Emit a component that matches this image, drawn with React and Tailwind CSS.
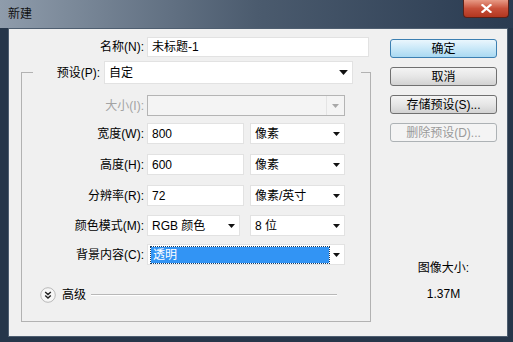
import React from 'react';

const FONT = { fontFamily: '"Liberation Sans", "Noto Sans CJK SC", sans-serif' };

function Arrow({ disabled, big }) {
  return (
    <svg width={big ? 9 : 7} height={big ? 5 : 4} viewBox="0 0 7 4" className="shrink-0">
      <polygon points="0,0 7,0 3.5,4" fill={disabled ? '#a8a8a8' : '#111'} />
    </svg>
  );
}

function TextBox({ value, w }) {
  return (
    <div className={`${w} h-[21px] bg-white border border-[#e2e2e2] flex items-center pl-[4px] text-[12px] text-black`}>
      {value}
    </div>
  );
}

function Select({ value, w, disabled, selected }) {
  if (disabled) {
    return (
      <div className={`${w} h-[21px] bg-[#f4f4f4] border border-[#b4b4b4] flex items-center justify-end`}>
        <div className="h-full w-[18px] border-l border-[#e4e4e4] flex items-center justify-center">
          <Arrow disabled />
        </div>
      </div>
    );
  }
  return (
    <div className={`${w} h-[21px] bg-white border border-[#e2e2e2] flex items-center pl-[3px] pr-[4px] gap-[4px] text-[12px] text-black`}>
      {selected ? (
        <div className="flex-1 h-[16px] bg-[#3294f4] outline outline-1 outline-dotted outline-[#1b3a5c] flex items-center pl-[2px] text-white">
          {value}
        </div>
      ) : (
        <div className="flex-1 pl-[1px]">{value}</div>
      )}
      <Arrow />
    </div>
  );
}

function Row({ label, children, mt, disabled }) {
  return (
    <div className={`flex items-center ${mt}`}>
      <div className={`w-[125px] text-right text-[12px] pr-[3px] ${disabled ? 'text-[#a3a3a3]' : 'text-black'}`}>
        {label}
      </div>
      <div className="flex gap-[6px]">{children}</div>
    </div>
  );
}

function Button({ children, primary, disabled }) {
  let cls = 'border-[#707070] bg-gradient-to-b from-[#f4f4f4] via-[#e6e6e6] to-[#d2d2d2] text-black';
  if (primary) cls = 'border-[#3c7fb1] bg-gradient-to-b from-[#eaf6fd] via-[#c9e8f8] to-[#a9d9f2] text-black';
  if (disabled) cls = 'border-[#adb2b5] bg-[#f4f4f4] text-[#9a9a9a]';
  return (
    <div className={`h-[19px] w-[107px] rounded-[3px] border flex items-center justify-center text-[12px] ${cls}`}>
      {children}
    </div>
  );
}

export default function App() {
  return (
    <div style={FONT} className="w-[513px] h-[342px] flex flex-col bg-[#26364a] overflow-hidden">
      {/* title bar */}
      <div className="h-[28px] flex items-start justify-between bg-gradient-to-r from-[#8f9cab] via-[#4b5b6e] to-[#2a3b51]">
        <span className="pl-[8px] pt-[6px] text-[12px] leading-[16px] text-[#111]">新建</span>
        <div className="mr-[4px] w-[46px] h-[18px] rounded-b-[4px] border border-t-0 border-[#5a2118] bg-gradient-to-b from-[#e79a86] via-[#c8503a] to-[#b2361f] flex items-center justify-center">
          <svg width="11" height="9" viewBox="0 0 11 9">
            <path d="M1.5 1 L9.5 8 M9.5 1 L1.5 8" stroke="#fff" strokeWidth="2.2" strokeLinecap="square" />
          </svg>
        </div>
      </div>

      {/* client area */}
      <div className="ml-[8px] mr-[5px] mb-[5px] flex-1 bg-[#f0f0f0] border border-[#4e5e70] flex">
        {/* left form */}
        <div className="w-[363px] flex flex-col pt-[8px]">
          <div className="flex items-center">
            <div className="w-[138px] text-right pr-[3px] text-[12px] text-black">名称(N):</div>
            <div className="w-[222px] h-[20px] bg-white border border-[#e2e2e2] flex items-center pl-[4px] text-[12px]">
              未标题-1
            </div>
          </div>

          <fieldset className="ml-[12px] mt-[4px] w-[350px] border border-[#b2b2b2] p-0 pb-[18px]">
            <legend className="ml-[11px] p-0">
              <div className="flex items-center">
                <div className="w-[68px] text-right text-[12px] text-black pr-[1px]">预设(P):</div>
                <div className="ml-[3px] mr-[8px] w-[249px] h-[23px] bg-white border border-[#e2e2e2] flex items-center justify-between pl-[4px] pr-[4px] text-[12px]">
                  <span>自定</span>
                  <Arrow big />
                </div>
              </div>
            </legend>

            <Row label="大小(I):" mt="mt-[11px]" disabled>
              <Select w="w-[198px]" disabled />
            </Row>
            <Row label="宽度(W):" mt="mt-[7px]">
              <TextBox value="800" w="w-[97px]" />
              <Select value="像素" w="w-[95px]" />
            </Row>
            <Row label="高度(H):" mt="mt-[10px]">
              <TextBox value="600" w="w-[97px]" />
              <Select value="像素" w="w-[95px]" />
            </Row>
            <Row label="分辨率(R):" mt="mt-[10px]">
              <TextBox value="72" w="w-[97px]" />
              <Select value="像素/英寸" w="w-[95px]" />
            </Row>
            <Row label="颜色模式(M):" mt="mt-[9px]">
              <div className="w-[93px] mr-[4px]">
                <Select value="RGB 颜色" w="w-[93px]" />
              </div>
              <Select value="8 位" w="w-[95px]" />
            </Row>
            <Row label="背景内容(C):" mt="mt-[8px]">
              <Select value="透明" w="w-[198px]" selected />
            </Row>

            <div className="mt-[22px] ml-[18px] flex items-center h-[16px]">
              <svg width="16" height="16" viewBox="0 0 16 16">
                <circle cx="8" cy="8" r="7.3" fill="#f6f6f6" stroke="#b9b9b9" />
                <path d="M5.2 5 L8 7.6 L10.8 5 M5.2 8.4 L8 11 L10.8 8.4" fill="none" stroke="#222" strokeWidth="1.4" />
              </svg>
              <span className="ml-[6px] text-[12px] text-black">高级</span>
              <div className="ml-[5px] w-[246px] h-[2px] border-t border-[#b8b8b8] border-b border-b-white" />
            </div>
          </fieldset>
        </div>

        {/* right buttons */}
        <div className="ml-[18px] pt-[10px] flex flex-col gap-[9px]">
          <Button primary>确定</Button>
          <Button>取消</Button>
          <Button>存储预设(S)...</Button>
          <Button disabled>删除预设(D)...</Button>
          <div className="mt-[108px] flex flex-col items-center gap-[8px] text-[12px] text-black">
            <span>图像大小:</span>
            <span>1.37M</span>
          </div>
        </div>
      </div>
    </div>
  );
}
